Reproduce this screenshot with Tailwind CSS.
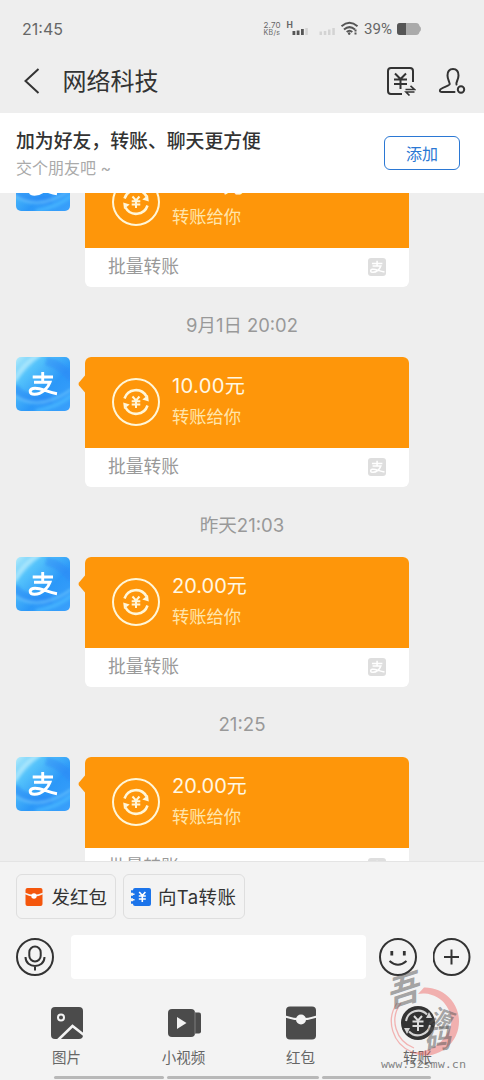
<!DOCTYPE html>
<html lang="zh-CN">
<head>
<meta charset="utf-8">
<title>网络科技</title>
<script src="https://cdn.jsdelivr.net/npm/@tailwindcss/browser@4"></script>
</head>
<body class="w-[484px] h-[1080px] overflow-hidden bg-[#eeeeee] font-['Inter','Noto_Sans_CJK_SC',sans-serif] text-[#333]">
<svg class="absolute w-0 h-0">
  <defs>
    <linearGradient id="sky" x1="0" y1="0" x2="1" y2="1"><stop offset="0" stop-color="#b5ecfb"/><stop offset=".25" stop-color="#55c3fb"/><stop offset=".6" stop-color="#2c98f8"/><stop offset="1" stop-color="#3aa0fb"/></linearGradient>
    <filter id="soft"><feGaussianBlur stdDeviation="1.500"/></filter>
    <clipPath id="round"><rect width="54" height="54" rx="5"/></clipPath>
  </defs>
  <symbol id="zhi" viewBox="12 13.500 31 27">
    <path d="M16.700 20H37M26.700 15V25.300M18 25.300H34C32 31 26 37.300 18.500 37.300C13.300 37.300 12.800 32.800 17 31.500C23 29.700 30 35 41 36.800" fill="none" stroke="currentColor" stroke-width="2.900"/>
  </symbol>
  <symbol id="avatar" viewBox="0 0 54 54">
    <g clip-path="url(#round)">
      <rect width="54" height="54" fill="url(#sky)"/>
      <g filter="url(#soft)" fill="none">
        <path d="M-2 24Q8 6 24-3" stroke="#c5f1fd" stroke-width="5" opacity=".6"/>
        <path d="M30 4Q46 8 56 22" stroke="#2a86f4" stroke-width="9" opacity=".45"/>
        <path d="M-2 30Q8 46 36 42" stroke="#2686f4" stroke-width="9" opacity=".55"/>
        <path d="M-2 38Q22 56 56 32" stroke="#7bd2ff" stroke-width="2" opacity=".7"/>
        <path d="M20 54Q42 50 56 38" stroke="#49b8ff" stroke-width="4" opacity=".8"/>
      </g>
      <use href="#zhi" x="12" y="13.500" width="31" height="27" color="#fff"/>
    </g>
  </symbol>
  <symbol id="coin" viewBox="0 0 48 48">
    <g fill="none" stroke="#fff6d8" stroke-width="2">
      <circle cx="24" cy="24" r="23"/>
      <path d="M12.500 20.500A12 12 0 0 1 34.500 18.500M35.500 27.500A12 12 0 0 1 13.500 29.500" stroke-width="2.600"/>
      <path d="M20.500 18.500L24 22.500L27.500 18.500M24 22.500V30M19.700 23.300H28.300M19.700 26.500H28.300" stroke-width="2"/>
    </g>
    <path d="M36.800 23.500L30.300 21.500L36 17ZM11.200 24.500L17.700 26.500L12 31Z" fill="#fff6d8"/>
  </symbol>
  <symbol id="badge" viewBox="0 0 18 18">
    <rect width="18" height="18" rx="3" fill="#dedede"/><use href="#zhi" x="1.500" y="2" width="16" height="14" color="#fff"/>
  </symbol>
</svg>

<div class="w-full h-full flex flex-col relative">
  <header class="h-[113px] shrink-0">
    <div class="h-[50px] pt-[8px] pl-[22px] pr-[62px] flex items-center justify-between text-[#666]">
      <span class="text-[16px]">21:45</span>
      <svg class="w-[162px] h-[24px]" viewBox="260 17 162 24">
        <g fill="#666" font-family="Inter"><text x="263.500" y="27.500" font-size="8" textLength="17">2.70</text><text x="263.500" y="35" font-size="7" textLength="16.500">KB/s</text><text x="286.500" y="28" font-size="8.500" font-weight="700">H</text></g>
        <text x="364" y="34.300" font-family="Roboto" font-size="15" fill="#666" textLength="28" lengthAdjust="spacingAndGlyphs">39%</text>
        <path d="M292.500 31h2.800v4h-2.800zM296.700 30.500h2.800v4.500h-2.800zM301 29h2.800v6h-2.800z" fill="#555"/><path d="M305.300 28h2.500v7h-2.500zM319.500 31.500h2.500v3.500h-2.500zM323.800 31h2.500v4h-2.500zM328 29.500h2.500v5.500h-2.500zM332.300 28h2.500v7h-2.500z" fill="#d3d3d3"/>
        <path d="M341.500 26.200Q349.500 19.300 357.500 26.200M344 29.500Q349.500 24.800 355 29.500M346.700 32Q349.500 29.500 352.300 32" fill="none" stroke="#555" stroke-width="2"/><circle cx="349.200" cy="33.600" r="1.300" fill="#555"/><path d="M354.500 29.500h2v2h-2zM354.500 32.500h2v2h-2z" fill="#555"/>
        <path d="M400 23H416Q419 23 419.500 26Q421 27 421 29T419.500 32Q419 35 416 35H400Q397 35 397 32V26Q397 23 400 23Z" fill="#aaa"/><path d="M400 23H406V35H400Q397 35 397 32V26Q397 23 400 23Z" fill="#555"/>
      </svg>
    </div>
    <div class="h-[63px] flex items-center pl-[24px] pr-[17px]">
      <svg class="w-[16px] h-[26px] -mt-[2px]" viewBox="0 0 16 26" fill="none" stroke="#333" stroke-width="2"><path d="M14.500 1L1.500 13L14.500 25"/></svg>
      <h1 class="ml-[22.500px] text-[24px] leading-[36px] pt-[1px] flex-1">网络科技</h1>
      <svg class="w-[30px] h-[30px] mr-[22px] -mt-[2px]" viewBox="386 65 30 30" fill="none" stroke="#333" stroke-width="2"><path d="M402 93H391Q388 93 388 90V70Q388 67 391 67H410Q413 67 413 70V81M395 72.500L400.500 78L406 72.500M400.500 78V88M394 78.500H407M394 83H407"/><path d="M405.500 88.500H414.500L410.500 84.800M414.500 91H406L409.500 94.500" stroke-width="1.600"/></svg>
      <svg class="w-[29px] h-[30px] -mt-[2px]" viewBox="438 66 29 30" fill="none" stroke="#333" stroke-width="2"><path d="M454.500 92H442Q439.500 92 440 90C441 87.500 448 86.500 449.500 84.500C450.500 83 447.500 80 447.500 75.500C447.500 71 449.500 69 453 69S458.500 71 458.500 75.500C458.500 80 455.500 82.500 456.500 84.500" stroke-linecap="round"/><circle cx="461" cy="89.500" r="3.200"/></svg>
    </div>
  </header>

  <section class="h-[80px] shrink-0 bg-white flex items-center justify-between pl-[16px] pr-[24px]">
    <div class="flex flex-col pt-[2px]">
      <p class="text-[18.850px] leading-[28px] font-medium whitespace-nowrap text-[#333]">加为好友，转账、聊天更方便</p>
      <p class="text-[16px] leading-[25px] text-[#aaa]">交个朋友吧 ~</p>
    </div>
    <button class="w-[76px] h-[34px] rounded-[6px] border-[1.500px] border-[#2b78d4] text-[#2b78d4] text-[16px] leading-none pt-[1px]">添加</button>
  </section>

  <main class="h-[668px] shrink-0 overflow-hidden">
    <div class="-mt-[36px] flex flex-col">
      <article class="h-[130px] flex pl-[16px]">
        <svg class="w-[54px] h-[54px]"><use href="#avatar"/></svg>
        <svg class="w-[7px] h-[20px] mt-[17px] ml-[8px]" viewBox="0 0 7 20"><path d="M7 1.500L1 8.500Q0 10 1 11.500L7 18.500Z" fill="#fe960a"/></svg>
        <div class="w-[324px] rounded-[6px] overflow-hidden bg-white">
          <div class="h-[90.500px] bg-[#fe960a] flex pl-[27px] pt-[14px]">
            <svg class="w-[48px] h-[48px] mt-[7px]"><use href="#coin"/></svg>
            <div class="ml-[12px]"><p class="text-[20.200px] leading-[30px] text-[#fff8e4]">10.00元</p><p class="text-[17.300px] leading-[32px] text-[#ffe5ab]">转账给你</p></div>
          </div>
          <div class="h-[39px] flex items-center justify-between pl-[23px] pr-[23px] text-[17.800px] text-[#999]"><span>批量转账</span><svg class="w-[18px] h-[18px]"><use href="#badge"/></svg></div>
        </div>
      </article>
      <time class="h-[70px] pt-[7px] flex items-center justify-center text-[18.400px] text-[#999]">9月1日 20:02</time>

      <article class="h-[130px] flex pl-[16px]">
        <svg class="w-[54px] h-[54px]"><use href="#avatar"/></svg>
        <svg class="w-[7px] h-[20px] mt-[17px] ml-[8px]" viewBox="0 0 7 20"><path d="M7 1.500L1 8.500Q0 10 1 11.500L7 18.500Z" fill="#fe960a"/></svg>
        <div class="w-[324px] rounded-[6px] overflow-hidden bg-white">
          <div class="h-[90.500px] bg-[#fe960a] flex pl-[27px] pt-[14px]">
            <svg class="w-[48px] h-[48px] mt-[7px]"><use href="#coin"/></svg>
            <div class="ml-[12px]"><p class="text-[20.200px] leading-[30px] tracking-[.3px] text-[#fff8e4]">10.00元</p><p class="text-[17.300px] leading-[32px] text-[#ffe5ab]">转账给你</p></div>
          </div>
          <div class="h-[39px] flex items-center justify-between pl-[23px] pr-[23px] text-[17.800px] text-[#999]"><span>批量转账</span><svg class="w-[18px] h-[18px]"><use href="#badge"/></svg></div>
        </div>
      </article>
      <time class="h-[70px] pt-[7px] flex items-center justify-center text-[18.600px] text-[#999]">昨天21:03</time>

      <article class="h-[130px] flex pl-[16px]">
        <svg class="w-[54px] h-[54px]"><use href="#avatar"/></svg>
        <svg class="w-[7px] h-[20px] mt-[17px] ml-[8px]" viewBox="0 0 7 20"><path d="M7 1.500L1 8.500Q0 10 1 11.500L7 18.500Z" fill="#fe960a"/></svg>
        <div class="w-[324px] rounded-[6px] overflow-hidden bg-white">
          <div class="h-[90.500px] bg-[#fe960a] flex pl-[27px] pt-[14px]">
            <svg class="w-[48px] h-[48px] mt-[7px]"><use href="#coin"/></svg>
            <div class="ml-[12px]"><p class="text-[20px] leading-[30px] text-[#fff8e4]">20.00元</p><p class="text-[17.300px] leading-[32px] text-[#ffe5ab]">转账给你</p></div>
          </div>
          <div class="h-[39px] flex items-center justify-between pl-[23px] pr-[23px] text-[17.800px] text-[#999]"><span>批量转账</span><svg class="w-[18px] h-[18px]"><use href="#badge"/></svg></div>
        </div>
      </article>
      <time class="h-[70px] pt-[7px] flex items-center justify-center text-[18.700px] text-[#999]">21:25</time>

      <article class="h-[130px] flex pl-[16px]">
        <svg class="w-[54px] h-[54px]"><use href="#avatar"/></svg>
        <svg class="w-[7px] h-[20px] mt-[17px] ml-[8px]" viewBox="0 0 7 20"><path d="M7 1.500L1 8.500Q0 10 1 11.500L7 18.500Z" fill="#fe960a"/></svg>
        <div class="w-[324px] rounded-[6px] overflow-hidden bg-white">
          <div class="h-[90.500px] bg-[#fe960a] flex pl-[27px] pt-[14px]">
            <svg class="w-[48px] h-[48px] mt-[7px]"><use href="#coin"/></svg>
            <div class="ml-[12px]"><p class="text-[20px] leading-[30px] text-[#fff8e4]">20.00元</p><p class="text-[17.300px] leading-[32px] text-[#ffe5ab]">转账给你</p></div>
          </div>
          <div class="h-[39px] flex items-center justify-between pl-[23px] pr-[23px] text-[17.800px] text-[#999]"><span>批量转账</span><svg class="w-[18px] h-[18px]"><use href="#badge"/></svg></div>
        </div>
      </article>
    </div>
  </main>

  <footer class="h-[219px] shrink-0 bg-[#f3f3f3] border-t border-[#e4e4e4] flex flex-col">
    <div class="flex gap-[7px] pl-[16px] pt-[12px] text-[18.500px] text-[#333]">
      <button class="w-[100px] h-[45px] rounded-[6px] border border-[#dedede] flex items-center pl-[8px] gap-[8.500px] whitespace-nowrap">
        <svg class="w-[18px] h-[18px] shrink-0" viewBox="0 0 18 18"><rect x=".5" width="17" height="18" rx="2" fill="#f4560c"/><path d="M0 5.500Q9 10 18 5.500" stroke="#f3f3f3" stroke-width="1.500" fill="none"/><circle cx="9" cy="8" r="2.700" fill="#fff"/></svg><span class="pt-[2px]">发红包</span></button>
      <button class="w-[122px] h-[45px] rounded-[6px] border border-[#dedede] flex items-center pl-[7px] gap-[7px] whitespace-nowrap">
        <svg class="w-[20px] h-[18px] shrink-0" viewBox="0 0 20 18"><rect x="2" width="18" height="18" rx="2" fill="#1c74ea"/><path d="M0 3.500H4M0 9H4M0 14.500H4" stroke="#1c74ea" stroke-width="2.600"/><path d="M1 6.200H3.500M1 11.800H3.500" stroke="#f3f3f3" stroke-width="1.400"/><path d="M8.200 4L11.300 7.500L14.400 4M11.300 7.500V14M7.800 8H14.800M7.800 11H14.800" fill="none" stroke="#fff" stroke-width="1.600"/></svg><span class="pt-[2px] tracking-[.35px]">向Ta转账</span></button>
    </div>
    <div class="flex items-center pl-[16px] pt-[16px] h-[60px]">
      <svg class="w-[38px] h-[38px]" viewBox="0 0 38 38" fill="none" stroke="#333" stroke-width="2"><circle cx="19" cy="19" r="18"/><rect x="13.300" y="8.500" width="11.400" height="15" rx="5.700"/><path d="M9.500 19C9.500 31 28.500 31 28.500 19M19 28V32.500"/></svg>
      <div class="ml-[17px] w-[295px] h-[44px] rounded-[4px] bg-white"></div>
      <svg class="ml-[13px] w-[38px] h-[38px]" viewBox="0 0 38 38" fill="none" stroke="#333" stroke-width="2"><circle cx="19" cy="19" r="18"/><path d="M12.800 13V17.500M25.300 13V17.500" stroke-width="2.800"/><path d="M10.500 23Q19 30.500 27.500 23"/></svg>
      <svg class="ml-[16px] w-[38px] h-[38px] -mt-[1px]" viewBox="0 0 38 38" fill="none" stroke="#333" stroke-width="2"><circle cx="18.500" cy="19" r="18"/><path d="M11 19H26M18.500 11.500V26.500"/></svg>
    </div>
    <nav class="px-[8px] mt-[23px] grid grid-cols-4 text-[14.500px] leading-[22px] text-[#666]">
      <div class="flex flex-col items-center gap-[2.500px]">
        <svg class="w-[40px] h-[42px]" viewBox="46 1002 40 42"><rect x="50" y="1007" width="32" height="32" rx="4" fill="#4b4b4b"/><circle cx="60" cy="1017.500" r="3" fill="none" stroke="#f3f3f3" stroke-width="2"/><path d="M57 1040L71.500 1026L83 1035" fill="none" stroke="#f3f3f3" stroke-width="2.500"/></svg>图片</div>
      <div class="flex flex-col items-center gap-[2.500px]">
        <svg class="w-[40px] h-[42px]" viewBox="163 1002 40 42"><rect x="189" y="1012.500" width="11" height="21" rx="2" fill="#4b4b4b"/><rect x="167" y="1009" width="27" height="28" rx="4" fill="#4b4b4b"/><path d="M194 1012V1034" stroke="#8b8b8b" stroke-width=".8"/><path d="M176 1017L185.500 1023L176 1029Z" fill="#f3f3f3"/></svg>小视频</div>
      <div class="flex flex-col items-center gap-[2.500px]">
        <svg class="w-[40px] h-[42px]" viewBox="280 1002 40 42"><rect x="285" y="1006.500" width="30" height="33" rx="4" fill="#4b4b4b"/><path d="M284 1016.500Q300 1022 316 1016.500" fill="none" stroke="#f3f3f3" stroke-width="2"/><circle cx="300" cy="1019.500" r="5" fill="#f3f3f3"/></svg>红包</div>
      <div class="flex flex-col items-center gap-[2.500px]">
        <svg class="w-[40px] h-[42px]" viewBox="397 1002 40 42"><circle cx="417" cy="1023" r="17" fill="#333"/><path d="M405 1021A12.300 12.300 0 0 1 426 1014.500M429 1025A12.300 12.300 0 0 1 408 1031.500" fill="none" stroke="#d5d5d5" stroke-width="2"/><path d="M425 1018L431 1018L428 1012ZM409 1028L403 1028L406 1034Z" fill="#d5d5d5"/><path d="M413 1016L417 1020.500L421 1016M417 1020.500V1031M411.500 1021.500H422.500M411.500 1026H422.500" fill="none" stroke="#ddd" stroke-width="2"/></svg>转账</div>
    </nav>
    <div class="mt-auto mb-[1px] pl-[54px] flex gap-[3px]">
      <i class="w-[110px] h-[3px] rounded-full bg-[#b8b8b8]"></i><i class="w-[152px] h-[3px] rounded-full bg-[#b8b8b8]"></i><i class="w-[109px] h-[3px] rounded-full bg-[#b8b8b8]"></i>
    </div>
  </footer>

  <!-- site watermark over the bottom-right corner -->
  <svg class="absolute left-[374px] top-[964px] w-[104px] h-[110px]" viewBox="374 964 104 110">
    <path fill="#ef5350" fill-opacity=".42" fill-rule="evenodd" d="M424 987.500A34 34 0 1 1 410 1052A38 38 0 0 0 451 1025A28 28 0 0 0 418 994Z"/>
    <path d="M397 1003A33 33 0 0 0 412 1052M401 1003A29 29 0 0 0 414 1048" fill="none" stroke="#ef5350" stroke-width="1.300" opacity=".4"/>
    <g fill="#555" fill-opacity=".52" font-family="'Noto Sans CJK SC'" font-weight="700">
      <text transform="translate(389 1008) rotate(-18) skewX(-18)" font-size="34">吾</text>
      <text transform="translate(428 1022) rotate(20) skewX(-10)" font-size="22">源</text>
      <text transform="translate(425 1050) rotate(-6) skewX(-12)" font-size="27">码</text>
    </g>
    <text x="381" y="1068" font-family="'DejaVu Sans Mono'" font-size="10.500" fill="#666" fill-opacity=".8" textLength="85" lengthAdjust="spacingAndGlyphs">www.52smw.cn</text>
  </svg>
</div>
</body>
</html>
